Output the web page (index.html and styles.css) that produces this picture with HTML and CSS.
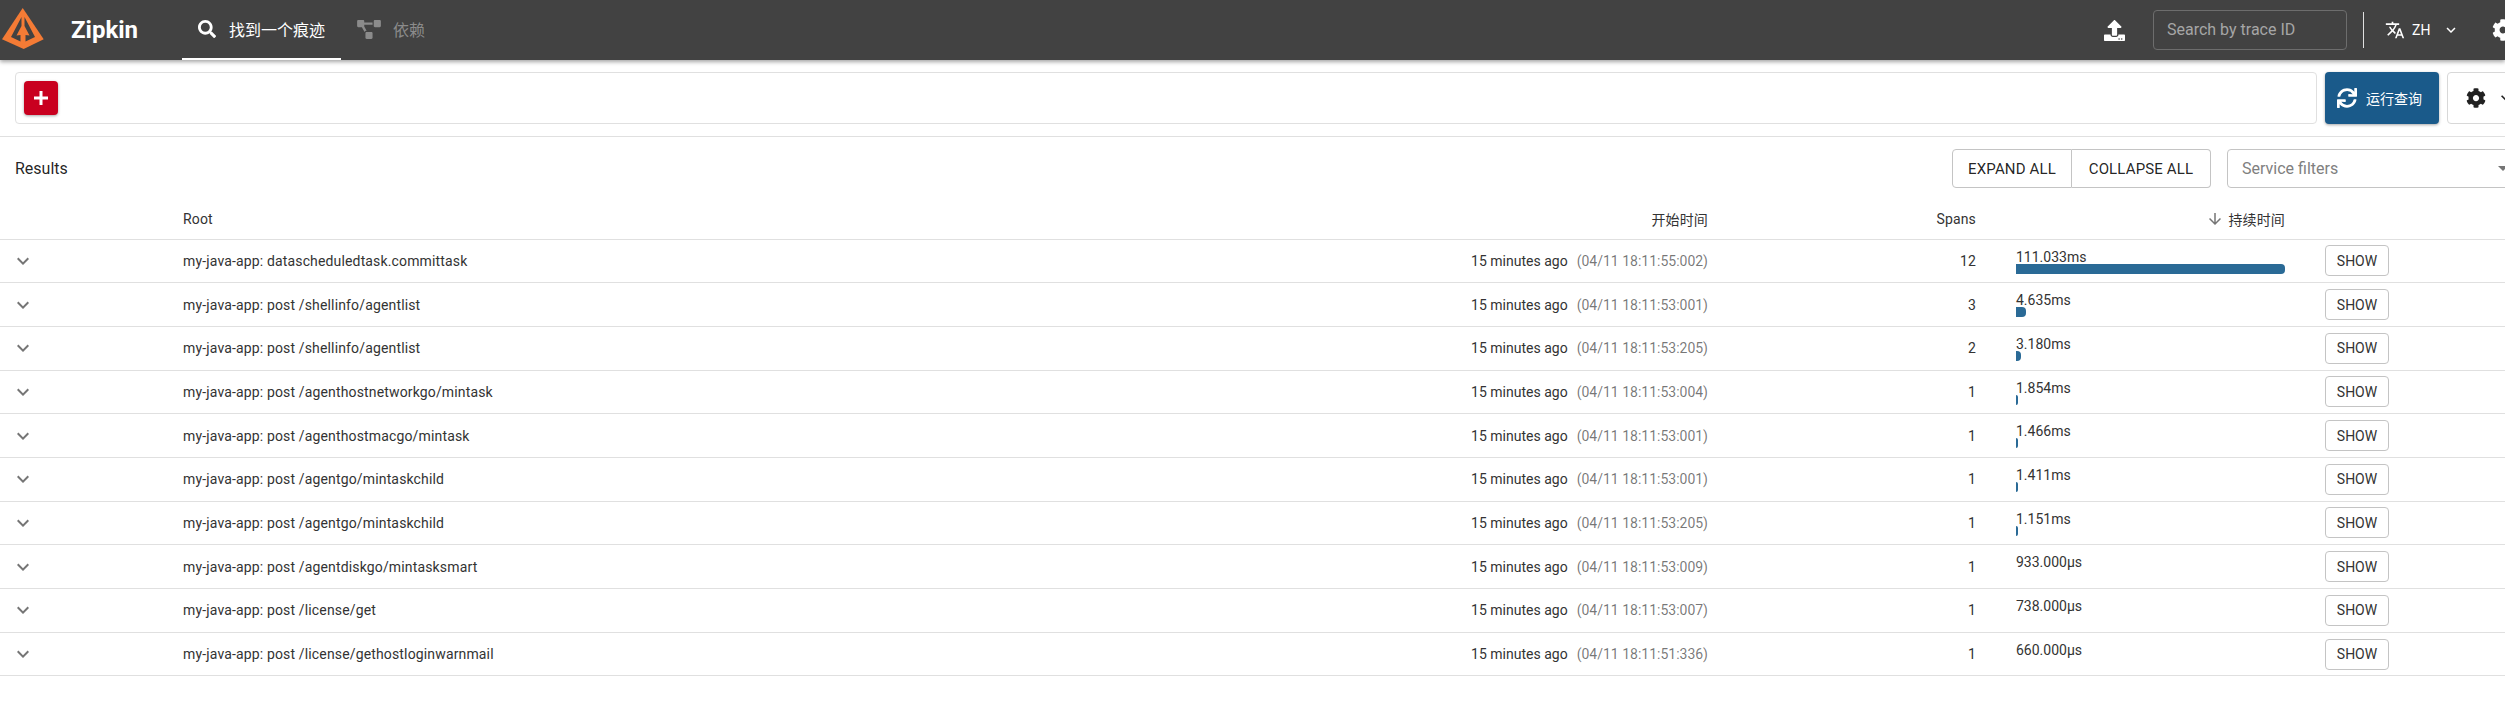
FILE: index.html
```html
<!DOCTYPE html>
<html lang="zh">
<head>
<meta charset="utf-8">
<title>Zipkin</title>
<link rel="stylesheet" href="styles.css">
</head>
<body>
<div class="page">
<header class="topbar">
  <svg class="logo" viewBox="0 0 46 52"><path fill="#f47b35" d="M22.700 8 L43.700 39.300 L23.700 49 L2 39.300 Z"/><path fill="#424242" d="M21.500 17 L11 37 L20.500 41.500 L20.500 35 L16.500 35.500 L21.500 26 Z M24.500 17 L35 37 L25.500 41.500 L25.500 35 L29.500 35.500 L24.500 26 Z"/></svg>
  <div class="brand">Zipkin</div>
  <nav class="tabs">
    <a class="tab tab-active"><svg class="tab-icon" viewBox="0 0 512 512"><path fill="currentColor" d="M505 442.7L405.3 343c-4.5-4.5-10.6-7-17-7H372c27.6-35.3 44-79.7 44-128C416 93.1 322.9 0 208 0S0 93.1 0 208s93.1 208 208 208c48.3 0 92.7-16.4 128-44v16.3c0 6.4 2.5 12.5 7 17l99.7 99.7c9.4 9.4 24.6 9.4 33.9 0l28.3-28.3c9.4-9.4 9.4-24.6.1-34zM208 336c-70.7 0-128-57.2-128-128 0-70.7 57.2-128 128-128 70.7 0 128 57.2 128 128 0 70.7-57.2 128-128 128z"/></svg><span>找到一个痕迹</span></a>
    <a class="tab tab-muted"><svg class="dep-icon" viewBox="0 0 640 512"><path fill="currentColor" d="M384 320H256c-17.67 0-32 14.33-32 32v128c0 17.67 14.33 32 32 32h128c17.67 0 32-14.33 32-32V352c0-17.67-14.33-32-32-32zM192 32c0-17.67-14.33-32-32-32H32C14.33 0 0 14.33 0 32v128c0 17.67 14.33 32 32 32h95.72l73.16 128.04C211.98 300.98 232.4 288 256 288h.28L192 175.51V128h224V64H192V32zM608 0H480c-17.67 0-32 14.33-32 32v128c0 17.67 14.33 32 32 32h128c17.67 0 32-14.33 32-32V32c0-17.67-14.33-32-32-32z"/></svg><span>依赖</span></a>
  </nav>
  <div class="top-right">
    <svg class="upload" viewBox="0 0 512 512"><path fill="currentColor" d="M296 384h-80c-13.3 0-24-10.7-24-24V192h-87.7c-17.8 0-26.7-21.5-14.1-34.1L242.3 5.7c7.5-7.5 19.8-7.5 27.3 0l152.2 152.2c12.6 12.6 3.7 34.1-14.1 34.1H320v168c0 13.3-10.7 24-24 24zm216-8v112c0 13.3-10.7 24-24 24H24c-13.3 0-24-10.7-24-24V376c0-13.3 10.7-24 24-24h136v8c0 30.9 25.1 56 56 56h80c30.9 0 56-25.1 56-56v-8h136c13.3 0 24 10.7 24 24zm-124 88c0-11-9-20-20-20s-20 9-20 20 9 20 20 20 20-9 20-20zm64 0c0-11-9-20-20-20s-20 9-20 20 9 20 20 20 20-9 20-20z"/></svg>
    <div class="trace-input">Search by trace ID</div>
    <div class="vrule"></div>
    <svg class="translate" viewBox="0 0 24 24"><path fill="currentColor" d="M12.87 15.07l-2.54-2.51.03-.03c1.74-1.94 2.98-4.17 3.71-6.53H17V4h-7V2H8v2H1v1.99h11.17C11.5 7.92 10.44 9.75 9 11.35 8.07 10.32 7.3 9.19 6.69 8h-2c.73 1.63 1.73 3.17 2.98 4.56l-5.09 5.02L4 19l5-5 3.11 3.11.76-2.04zM18.5 10h-2L12 22h2l1.12-3h4.75L21 22h2l-4.5-12zm-2.62 7l1.62-4.33L19.12 17h-3.24z"/></svg>
    <span class="lang">ZH</span>
    <svg class="lang-chev" viewBox="0 0 24 24"><path fill="currentColor" d="M16.59 8.59L12 13.17 7.41 8.59 6 10l6 6 6-6z"/></svg>
    <svg class="top-gear" viewBox="0 0 512 512"><path fill="currentColor" d="M487.4 315.7l-42.6-24.6c4.3-23.2 4.3-47 0-70.2l42.6-24.6c4.9-2.8 7.1-8.6 5.5-14-11.1-35.6-30-67.8-54.7-94.6-3.8-4.1-10-5.1-14.8-2.3L380.8 110c-17.9-15.4-38.5-27.3-60.8-35.1V25.8c0-5.6-3.9-10.5-9.4-11.7-36.7-8.2-74.3-7.8-109.2 0-5.5 1.2-9.4 6.1-9.4 11.7V75c-22.2 7.9-42.8 19.8-60.8 35.1L88.7 85.5c-4.9-2.8-11-1.9-14.8 2.3-24.7 26.7-43.6 58.9-54.7 94.6-1.7 5.4.6 11.2 5.5 14L67.3 221c-4.3 23.2-4.3 47 0 70.2l-42.6 24.6c-4.9 2.8-7.1 8.6-5.5 14 11.1 35.6 30 67.8 54.7 94.6 3.8 4.1 10 5.1 14.8 2.3l42.6-24.6c17.9 15.4 38.5 27.3 60.8 35.1v49.2c0 5.6 3.9 10.5 9.4 11.7 36.7 8.2 74.3 7.8 109.2 0 5.5-1.2 9.4-6.1 9.4-11.7v-49.2c22.2-7.9 42.8-19.8 60.8-35.1l42.6 24.6c4.9 2.8 11 1.9 14.8-2.3 24.7-26.7 43.6-58.9 54.7-94.6 1.5-5.5-.7-11.3-5.6-14.1zM256 336c-44.1 0-80-35.9-80-80s35.9-80 80-80 80 35.9 80 80-35.9 80-80 80z"/></svg>
  </div>
</header>

<section class="querybar">
  <div class="criteria"><button class="add-btn"><svg class="plus" viewBox="0 0 16 16"><path fill="currentColor" d="M6.5 1h3v5.5H15v3H9.500V15h-3V9.500H1v-3h5.500z"/></svg></button></div>
  <button class="run-btn"><svg class="sync" viewBox="0 0 512 512"><path fill="currentColor" d="M440.65 12.57l4 82.77A247.16 247.16 0 0 0 255.83 8C134.73 8 33.91 94.92 12.29 209.82A12 12 0 0 0 24.09 224h49.05a12 12 0 0 0 11.67-9.26 175.91 175.91 0 0 1 317-56.94l-101.46-4.86a12 12 0 0 0-12.57 12v47.41a12 12 0 0 0 12 12H500a12 12 0 0 0 12-12V12a12 12 0 0 0-12-12h-47.37a12 12 0 0 0-11.98 12.57zM255.83 432a175.61 175.61 0 0 1-146-77.8l101.8 4.87a12 12 0 0 0 12.57-12v-47.4a12 12 0 0 0-12-12H12a12 12 0 0 0-12 12V500a12 12 0 0 0 12 12h47.35a12 12 0 0 0 12-12.6l-4.15-82.57A247.17 247.17 0 0 0 255.83 504c121.11 0 221.93-86.92 243.55-201.82a12 12 0 0 0-11.8-14.18h-49.05a12 12 0 0 0-11.67 9.26A175.86 175.86 0 0 1 255.83 432z"/></svg><span>运行查询</span></button>
  <button class="settings-btn"><svg class="gear" viewBox="0 0 512 512"><path fill="currentColor" d="M487.4 315.7l-42.6-24.6c4.3-23.2 4.3-47 0-70.2l42.6-24.6c4.9-2.8 7.1-8.6 5.5-14-11.1-35.6-30-67.8-54.7-94.6-3.8-4.1-10-5.1-14.8-2.3L380.8 110c-17.9-15.4-38.5-27.3-60.8-35.1V25.8c0-5.6-3.9-10.5-9.4-11.7-36.7-8.2-74.3-7.8-109.2 0-5.5 1.2-9.4 6.1-9.4 11.7V75c-22.2 7.9-42.8 19.8-60.8 35.1L88.7 85.5c-4.9-2.8-11-1.9-14.8 2.3-24.7 26.7-43.6 58.9-54.7 94.6-1.7 5.4.6 11.2 5.5 14L67.3 221c-4.3 23.2-4.3 47 0 70.2l-42.6 24.6c-4.9 2.8-7.1 8.6-5.5 14 11.1 35.6 30 67.8 54.7 94.6 3.8 4.1 10 5.1 14.8 2.3l42.6-24.6c17.9 15.4 38.5 27.3 60.8 35.1v49.2c0 5.6 3.9 10.5 9.4 11.7 36.7 8.2 74.3 7.8 109.2 0 5.5-1.2 9.4-6.1 9.4-11.7v-49.2c22.2-7.9 42.8-19.8 60.8-35.1l42.6 24.6c4.9 2.8 11 1.9 14.8-2.3 24.7-26.7 43.6-58.9 54.7-94.6 1.5-5.5-.7-11.3-5.6-14.1zM256 336c-44.1 0-80-35.9-80-80s35.9-80 80-80 80 35.9 80 80-35.9 80-80 80z"/></svg><svg class="settings-chev" viewBox="0 0 24 24"><path fill="currentColor" d="M16.59 8.59L12 13.17 7.41 8.59 6 10l6 6 6-6z"/></svg></button>
</section>

<section class="results-bar">
  <div class="results-title">Results</div>
  <div class="btn-group"><button class="group-btn">EXPAND ALL</button><button class="group-btn">COLLAPSE ALL</button></div>
  <div class="service-filter"><span>Service filters</span><svg class="filter-arrow" viewBox="0 0 10 5"><path fill="currentColor" d="M0 0h10L5 5z"/></svg></div>
</section>

<section class="table">
  <div class="row head">
    <div></div>
    <div>Root</div>
    <div class="right">开始时间</div>
    <div class="right">Spans</div>
    <div class="dur-head"><svg class="sort" viewBox="0 0 24 24"><path fill="currentColor" d="M20 12l-1.410-1.410L13 16.170V4h-2v12.170l-5.580-5.590L4 12l8 8 8-8z"/></svg><span>持续时间</span></div>
    <div></div>
  </div>
  <div class="row">
    <div class="chev-cell"><svg class="chev" viewBox="0 0 24 24"><path fill="currentColor" d="M16.59 8.59L12 13.17 7.41 8.59 6 10l6 6 6-6z"/></svg></div>
    <div>my-java-app: datascheduledtask.committask</div>
    <div class="right time">15 minutes ago<span class="stamp">(04/11 18:11:55:002)</span></div>
    <div class="right">12</div>
    <div class="dur"><div class="dur-text">111.033ms</div><div class="bar" style="width:269px"></div></div>
    <div class="act"><button class="show">SHOW</button></div>
  </div>
  <div class="row">
    <div class="chev-cell"><svg class="chev" viewBox="0 0 24 24"><path fill="currentColor" d="M16.59 8.59L12 13.17 7.41 8.59 6 10l6 6 6-6z"/></svg></div>
    <div>my-java-app: post /shellinfo/agentlist</div>
    <div class="right time">15 minutes ago<span class="stamp">(04/11 18:11:53:001)</span></div>
    <div class="right">3</div>
    <div class="dur"><div class="dur-text">4.635ms</div><div class="bar" style="width:10px"></div></div>
    <div class="act"><button class="show">SHOW</button></div>
  </div>
  <div class="row">
    <div class="chev-cell"><svg class="chev" viewBox="0 0 24 24"><path fill="currentColor" d="M16.59 8.59L12 13.17 7.41 8.59 6 10l6 6 6-6z"/></svg></div>
    <div>my-java-app: post /shellinfo/agentlist</div>
    <div class="right time">15 minutes ago<span class="stamp">(04/11 18:11:53:205)</span></div>
    <div class="right">2</div>
    <div class="dur"><div class="dur-text">3.180ms</div><div class="bar" style="width:5px"></div></div>
    <div class="act"><button class="show">SHOW</button></div>
  </div>
  <div class="row">
    <div class="chev-cell"><svg class="chev" viewBox="0 0 24 24"><path fill="currentColor" d="M16.59 8.59L12 13.17 7.41 8.59 6 10l6 6 6-6z"/></svg></div>
    <div>my-java-app: post /agenthostnetworkgo/mintask</div>
    <div class="right time">15 minutes ago<span class="stamp">(04/11 18:11:53:004)</span></div>
    <div class="right">1</div>
    <div class="dur"><div class="dur-text">1.854ms</div><div class="bar" style="width:2px"></div></div>
    <div class="act"><button class="show">SHOW</button></div>
  </div>
  <div class="row">
    <div class="chev-cell"><svg class="chev" viewBox="0 0 24 24"><path fill="currentColor" d="M16.59 8.59L12 13.17 7.41 8.59 6 10l6 6 6-6z"/></svg></div>
    <div>my-java-app: post /agenthostmacgo/mintask</div>
    <div class="right time">15 minutes ago<span class="stamp">(04/11 18:11:53:001)</span></div>
    <div class="right">1</div>
    <div class="dur"><div class="dur-text">1.466ms</div><div class="bar" style="width:2px"></div></div>
    <div class="act"><button class="show">SHOW</button></div>
  </div>
  <div class="row">
    <div class="chev-cell"><svg class="chev" viewBox="0 0 24 24"><path fill="currentColor" d="M16.59 8.59L12 13.17 7.41 8.59 6 10l6 6 6-6z"/></svg></div>
    <div>my-java-app: post /agentgo/mintaskchild</div>
    <div class="right time">15 minutes ago<span class="stamp">(04/11 18:11:53:001)</span></div>
    <div class="right">1</div>
    <div class="dur"><div class="dur-text">1.411ms</div><div class="bar" style="width:2px"></div></div>
    <div class="act"><button class="show">SHOW</button></div>
  </div>
  <div class="row">
    <div class="chev-cell"><svg class="chev" viewBox="0 0 24 24"><path fill="currentColor" d="M16.59 8.59L12 13.17 7.41 8.59 6 10l6 6 6-6z"/></svg></div>
    <div>my-java-app: post /agentgo/mintaskchild</div>
    <div class="right time">15 minutes ago<span class="stamp">(04/11 18:11:53:205)</span></div>
    <div class="right">1</div>
    <div class="dur"><div class="dur-text">1.151ms</div><div class="bar" style="width:2px"></div></div>
    <div class="act"><button class="show">SHOW</button></div>
  </div>
  <div class="row">
    <div class="chev-cell"><svg class="chev" viewBox="0 0 24 24"><path fill="currentColor" d="M16.59 8.59L12 13.17 7.41 8.59 6 10l6 6 6-6z"/></svg></div>
    <div>my-java-app: post /agentdiskgo/mintasksmart</div>
    <div class="right time">15 minutes ago<span class="stamp">(04/11 18:11:53:009)</span></div>
    <div class="right">1</div>
    <div class="dur"><div class="dur-text">933.000µs</div></div>
    <div class="act"><button class="show">SHOW</button></div>
  </div>
  <div class="row">
    <div class="chev-cell"><svg class="chev" viewBox="0 0 24 24"><path fill="currentColor" d="M16.59 8.59L12 13.17 7.41 8.59 6 10l6 6 6-6z"/></svg></div>
    <div>my-java-app: post /license/get</div>
    <div class="right time">15 minutes ago<span class="stamp">(04/11 18:11:53:007)</span></div>
    <div class="right">1</div>
    <div class="dur"><div class="dur-text">738.000µs</div></div>
    <div class="act"><button class="show">SHOW</button></div>
  </div>
  <div class="row">
    <div class="chev-cell"><svg class="chev" viewBox="0 0 24 24"><path fill="currentColor" d="M16.59 8.59L12 13.17 7.41 8.59 6 10l6 6 6-6z"/></svg></div>
    <div>my-java-app: post /license/gethostloginwarnmail</div>
    <div class="right time">15 minutes ago<span class="stamp">(04/11 18:11:51:336)</span></div>
    <div class="right">1</div>
    <div class="dur"><div class="dur-text">660.000µs</div></div>
    <div class="act"><button class="show">SHOW</button></div>
  </div>
</section>
</div>
</body>
</html>
```
FILE: styles.css
```css
html, body { margin: 0; padding: 0; background: #fff; height: 711px; overflow: hidden; }
* { box-sizing: border-box; }
body { font-family: Roboto, "Noto Sans CJK SC", sans-serif; color: rgba(0,0,0,.87); font-size: 14px; }
button { font-family: inherit; }
.page { width: 2505px; overflow: hidden; height: 711px; }

.topbar { position: relative; z-index: 2; height: 60px; background: #424242; color: #fff; display: flex; align-items: center; box-shadow: 0 2px 4px rgba(0,0,0,.35); }
.logo { width: 46px; height: 52px; flex: none; align-self: flex-start; }
.brand { font-size: 24px; font-weight: 700; margin-left: 25px; width: 111px; line-height: 60px; }
.tabs { display: flex; height: 60px; }
.tab { display: flex; align-items: center; height: 60px; font-size: 16px; color: #fff; border-bottom: 2px solid transparent; }
.tab-active { width: 159px; padding-left: 16px; border-bottom-color: #fff; }
.tab-muted { color: #8b8b8b; padding-left: 16px; }
.tab-icon { width: 18px; height: 18px; margin-right: 13px; flex: none; }
.dep-icon { width: 24px; height: 19px; margin-right: 12px; flex: none; }
.top-right { margin-left: auto; display: flex; align-items: center; height: 60px; flex: none; width: 401px; }
.upload { width: 21px; height: 21px; margin-right: 28px; flex: none; }
.trace-input { width: 194px; height: 40px; border: 1px solid #6d6d6d; border-radius: 4px; color: #a6a6a6; font-size: 16px; line-height: 38px; padding-left: 13px; flex: none; }
.vrule { width: 1px; height: 36px; background: #e0e0e0; margin-left: 16px; flex: none; }
.translate { width: 20px; height: 20px; margin-left: 21px; flex: none; }
.lang { font-size: 14px; margin-left: 7px; width: 26px; flex: none; }
.lang-chev { width: 18px; height: 18px; margin-left: 4px; flex: none; }
.top-gear { width: 22px; height: 22px; margin-left: 32px; flex: none; }

.querybar { height: 77px; border-bottom: 1px solid #e0e0e0; display: flex; align-items: flex-start; padding: 12px 0 0 15px; }
.criteria { width: 2302px; height: 52px; border: 1px solid #e0e0e0; border-radius: 4px; padding: 8px; flex: none; }
.add-btn { width: 34px; height: 34px; border: 0; border-radius: 4px; background: #c9001f; color: #fff; display: flex; align-items: center; justify-content: center; padding: 0; box-shadow: 0 1px 3px rgba(0,0,0,.35); }
.plus { width: 16px; height: 16px; }
.run-btn { margin-left: 8px; width: 114px; height: 52px; border: 0; border-radius: 4px; background: #1a5a8a; color: #fff; display: flex; align-items: center; padding: 0 0 0 12px; font-size: 14px; flex: none; box-shadow: 0 1px 3px rgba(0,0,0,.35); }
.sync { width: 20px; height: 20px; margin-right: 9px; }
.settings-btn { margin-left: 8px; width: 90px; height: 52px; border: 1px solid #d8d8d8; border-radius: 4px; background: #fff; display: flex; align-items: center; padding: 0 0 0 18px; flex: none; color: rgba(0,0,0,.87); }
.gear { width: 20px; height: 20px; }
.settings-chev { width: 20px; height: 20px; margin-left: 10px; flex: none; }

.results-bar { height: 63px; display: flex; align-items: center; padding-left: 15px; }
.results-title { font-size: 16px; width: 1937px; flex: none; }
.btn-group { display: flex; height: 39px; flex: none; }
.group-btn { height: 39px; background: #fff; border: 1px solid #c4c4c4; font-size: 15px; color: rgba(0,0,0,.87); letter-spacing: .01em; padding: 0; }
.group-btn:first-child { width: 120px; border-radius: 4px 0 0 4px; }
.group-btn:last-child { width: 139px; border-left-width: 0; border-radius: 0 4px 4px 0; }
.service-filter { margin-left: 16px; width: 290px; height: 39px; border: 1px solid #c4c4c4; border-radius: 4px; color: #808080; font-size: 16px; display: flex; align-items: center; padding: 0 0 0 14px; flex: none; }
.filter-arrow { width: 10px; height: 5px; margin-left: 160px; flex: none; color: #757575; }

.row { display: grid; grid-template-columns: 183px 600px 925px 268px 309px 220px; height: 43.7px; border-bottom: 1px solid #e0e0e0; align-items: center; letter-spacing: .01071em; color: #333; }
.head { height: 39.5px; }
.right { text-align: right; }
.time { letter-spacing: 0; }
.stamp { color: rgba(0,0,0,.54); margin-left: 9px; }
.chev-cell { padding-left: 11px; display: flex; align-items: center; }
.chev { width: 24px; height: 24px; color: rgba(0,0,0,.54); display: block; }
.dur { align-self: stretch; padding-left: 40px; display: flex; flex-direction: column; padding-top: 10px; letter-spacing: 0; }
.dur-text { line-height: 14px; }
.bar { height: 10px; background: #2a6a96; border-radius: 0 4px 4px 0; }
.dur-head { display: flex; align-items: center; justify-content: flex-end; }
.sort { width: 18px; height: 18px; color: rgba(0,0,0,.54); margin-right: 4px; }
.act { padding-left: 40px; display: flex; align-items: center; }
.show { width: 64px; height: 31px; background: #fff; border: 1px solid #c4c4c4; border-radius: 4px; font-size: 14px; color: #333; letter-spacing: 0; padding: 0; }
```
